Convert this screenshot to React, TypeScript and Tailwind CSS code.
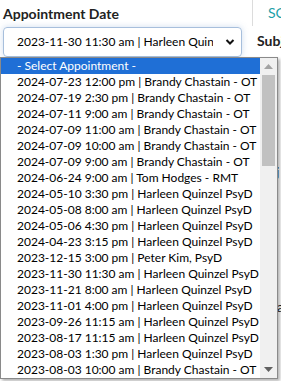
import React from "react";

const items = [
  "2024-07-23 12:00 pm | Brandy Chastain - OT",
  "2024-07-19 2:30 pm | Brandy Chastain - OT",
  "2024-07-11 9:00 am | Brandy Chastain - OT",
  "2024-07-09 11:00 am | Brandy Chastain - OT",
  "2024-07-09 10:00 am | Brandy Chastain - OT",
  "2024-07-09 9:00 am | Brandy Chastain - OT",
  "2024-06-24 9:00 am | Tom Hodges - RMT",
  "2024-05-10 3:30 pm | Harleen Quinzel PsyD",
  "2024-05-08 8:00 am | Harleen Quinzel PsyD",
  "2024-05-06 4:30 pm | Harleen Quinzel PsyD",
  "2024-04-23 3:15 pm | Harleen Quinzel PsyD",
  "2023-12-15 3:00 pm | Peter Kim, PsyD",
  "2023-11-30 11:30 am | Harleen Quinzel PsyD",
  "2023-11-21 8:00 am | Harleen Quinzel PsyD",
  "2023-11-01 4:00 pm | Harleen Quinzel PsyD",
  "2023-09-26 11:15 am | Harleen Quinzel PsyD",
  "2023-08-17 11:15 am | Harleen Quinzel PsyD",
  "2023-08-03 1:30 pm | Harleen Quinzel PsyD",
  "2023-08-03 10:00 am | Brandy Chastain - OT",
];

export default function App() {
  return (
    <div
      className="relative w-[281px] h-[381px] overflow-hidden bg-white text-black"
      style={{ fontFamily: "Lato, 'Liberation Sans', sans-serif" }}
    >
      <div className="flex h-full">
        <div className="w-[252px] shrink-0 pl-[3px] pt-[5px]">
          <div className="text-[14px] font-bold leading-[17px] text-[#222]">Appointment Date</div>
          <div className="mt-[5px] w-[239px] h-[30px] rounded-[4px] border border-[#a7bfdc] shadow-[0_0_6px_rgba(120,160,210,0.35)] flex items-center pl-[13px] pr-[6px]">
            <div className="w-[196px] overflow-hidden whitespace-nowrap text-[12px] leading-[16px]">
              2023-11-30 11:30 am | Harleen Quinzel PsyD
            </div>
            <div className="flex-1" />
            <svg width="10" height="8" viewBox="0 0 10 8" className="shrink-0">
              <path d="M1.5 2 L5 5.5 L8.5 2" stroke="#111" strokeWidth="2" fill="none" />
            </svg>
          </div>
        </div>
        <div className="flex-1 flex flex-col overflow-hidden">
          <div className="border-l border-[#dcdcdc] h-[26px] pl-[15px] pt-[2px] text-[14px] text-[#20a0a8] whitespace-nowrap">SC</div>
          <div className="pl-[5px] pt-[4px] text-[14px] font-bold text-[#222] whitespace-nowrap">Subj</div>
          <div className="mt-[110px] pl-[24px] text-[14px] text-[#222]">j</div>
          <div className="mt-[114px] pl-[25px] text-[14px] text-[#222]">a</div>
        </div>
      </div>

      <div className="absolute left-0 top-[57px] w-[278px] h-[322px] border border-[#8a8a8a] bg-white shadow-[2px_2px_3px_rgba(0,0,0,0.3)] flex">
        <div className="flex-1 flex flex-col text-[12px] leading-[16px]">
          <div className="h-[16px] bg-[#1f6fd6] text-white pl-[16px] whitespace-nowrap">- Select Appointment -</div>
          {items.map((t) => (
            <div key={t} className="h-[16px] pl-[16px] whitespace-nowrap overflow-hidden">
              {t}
            </div>
          ))}
        </div>
        <div className="w-[17px] bg-[#f0f0f0] flex flex-col items-center">
          <div className="h-[17px] flex items-center justify-center">
            <svg width="9" height="5" viewBox="0 0 9 5"><path d="M0 5 L4.5 0 L9 5 Z" fill="#a3a3a3" /></svg>
          </div>
          <div className="w-[13px] h-[91px] bg-[#c1c1c1]" />
          <div className="flex-1" />
          <div className="h-[17px] flex items-center justify-center">
            <svg width="9" height="5" viewBox="0 0 9 5"><path d="M0 0 L4.5 5 L9 0 Z" fill="#606060" /></svg>
          </div>
        </div>
      </div>
    </div>
  );
}
